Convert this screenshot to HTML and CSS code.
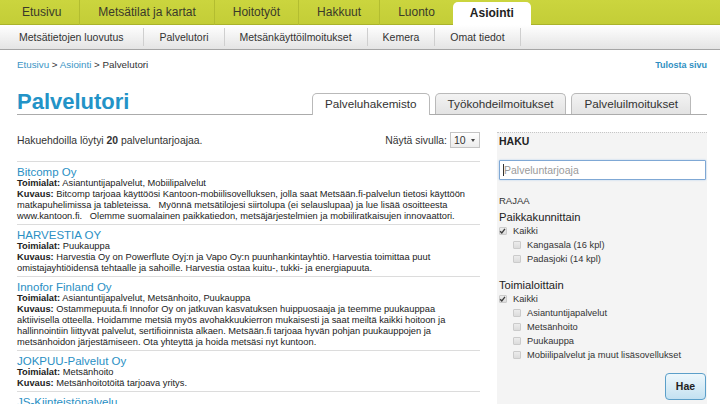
FILE: index.html
```html
<!DOCTYPE html>
<html lang="fi">
<head>
<meta charset="utf-8">
<title>Palvelutori</title>
<link rel="stylesheet" href="styles.css">
</head>
<body>
<header>
  <nav class="mainnav">
    <a href="#">Etusivu</a>
    <a href="#">Metsätilat ja kartat</a>
    <a href="#">Hoitotyöt</a>
    <a href="#">Hakkuut</a>
    <a href="#" class="nosep">Luonto</a>
    <a href="#" class="active">Asiointi</a>
  </nav>
  <nav class="subnav">
    <a href="#">Metsätietojen luovutus</a>
    <a href="#">Palvelutori</a>
    <a href="#">Metsänkäyttöilmoitukset</a>
    <a href="#">Kemera</a>
    <a href="#">Omat tiedot</a>
  </nav>
</header>

<div class="page">
  <div class="crumbs-row">
    <div class="crumbs"><a href="#">Etusivu</a> &gt; <a href="#">Asiointi</a> &gt; Palvelutori</div>
    <a href="#" class="print">Tulosta sivu</a>
  </div>

  <div class="title-row">
    <h1>Palvelutori</h1>
    <div class="tabs">
      <a href="#" class="tab active">Palveluhakemisto</a>
      <a href="#" class="tab">Työkohdeilmoitukset</a>
      <a href="#" class="tab">Palveluilmoitukset</a>
    </div>
  </div>

  <div class="main">
    <section class="results">
      <div class="results-head">
        <span>Hakuehdoilla löytyi <b>20</b> palveluntarjoajaa.</span>
        <span class="perpage">Näytä sivulla: <span class="select">10</span></span>
      </div>
      <ul class="list">
        <li>
          <a href="#" class="name">Bitcomp Oy</a>
          <p><b>Toimialat:</b> Asiantuntijapalvelut, Mobiilipalvelut</p>
          <p><b>Kuvaus:</b> Bitcomp tarjoaa käyttöösi Kantoon-mobiilisovelluksen, jolla saat Metsään.fi-palvelun tietosi käyttöön matkapuhelimissa ja tableteissa. &nbsp;&nbsp;Myönnä metsätilojesi siirtolupa (ei selauslupaa) ja lue lisää osoitteesta www.kantoon.fi. &nbsp;&nbsp;Olemme suomalainen paikkatiedon, metsäjärjestelmien ja mobiiliratkaisujen innovaattori.</p>
        </li>
        <li>
          <a href="#" class="name">HARVESTIA OY</a>
          <p><b>Toimialat:</b> Puukauppa</p>
          <p><b>Kuvaus:</b> Harvestia Oy on Powerflute Oyj:n ja Vapo Oy:n puunhankintayhtiö. Harvestia toimittaa puut omistajayhtiöidensä tehtaalle ja sahoille. Harvestia ostaa kuitu-, tukki- ja energiapuuta.</p>
        </li>
        <li>
          <a href="#" class="name">Innofor Finland Oy</a>
          <p><b>Toimialat:</b> Asiantuntijapalvelut, Metsänhoito, Puukauppa</p>
          <p><b>Kuvaus:</b> Ostammepuuta.fi Innofor Oy on jatkuvan kasvatuksen huippuosaaja ja teemme puukauppaa aktiivisella otteella. Hoidamme metsiä myös avohakkuukierron mukaisesti ja saat meiltä kaikki hoitoon ja hallinnointiin liittyvät palvelut, sertifioinnista alkaen. Metsään.fi tarjoaa hyvän pohjan puukauppojen ja metsänhoidon järjestämiseen. Ota yhteyttä ja hoida metsäsi nyt kuntoon.</p>
        </li>
        <li>
          <a href="#" class="name">JOKPUU-Palvelut Oy</a>
          <p><b>Toimialat:</b> Metsänhoito</p>
          <p><b>Kuvaus:</b> Metsänhoitotöitä tarjoava yritys.</p>
        </li>
        <li>
          <a href="#" class="name">JS-Kiinteistöpalvelu</a>
          <p><b>Toimialat:</b> Metsänhoito</p>
        </li>
      </ul>
    </section>

    <aside class="sidebar">
      <h2 class="haku">HAKU</h2>
      <div class="searchbox">
        <input type="text" placeholder="Palveluntarjoaja">
        <span class="caret"></span>
      </div>
      <div class="rajaa">RAJAA</div>
      <h3 class="group">Paikkakunnittain</h3>
      <ul class="checks">
        <li><span class="cb checked"><svg viewBox="0 0 8 8" width="8" height="8"><path d="M1.3 4.2 L3.2 6.2 L6.8 1.6" fill="none" stroke="#3a3a3a" stroke-width="1.5"/></svg></span>Kaikki</li>
        <li class="sub"><span class="cb"></span>Kangasala (16 kpl)</li>
        <li class="sub"><span class="cb"></span>Padasjoki (14 kpl)</li>
      </ul>
      <h3 class="group group2">Toimialoittain</h3>
      <ul class="checks">
        <li><span class="cb checked"><svg viewBox="0 0 8 8" width="8" height="8"><path d="M1.3 4.2 L3.2 6.2 L6.8 1.6" fill="none" stroke="#3a3a3a" stroke-width="1.5"/></svg></span>Kaikki</li>
        <li class="sub"><span class="cb"></span>Asiantuntijapalvelut</li>
        <li class="sub"><span class="cb"></span>Metsänhoito</li>
        <li class="sub"><span class="cb"></span>Puukauppa</li>
        <li class="sub"><span class="cb"></span>Mobiilipalvelut ja muut lisäsovellukset</li>
      </ul>
      <button type="button" class="hae">Hae</button>
    </aside>
  </div>
</div>
</body>
</html>
```

FILE: styles.css
```css
* { box-sizing: border-box; }
html, body { margin: 0; padding: 0; }
body {
  font-family: "Liberation Sans", Arial, sans-serif;
  color: #333;
  background: #fff;
  width: 720px;
  height: 404px;
  overflow: hidden;
}
a { color: #2b8ec3; text-decoration: none; }

/* main navigation */
.mainnav {
  display: flex;
  height: 25px;
  padding-left: 4px;
  background: linear-gradient(#cbd53e, #c3cd37);
  box-shadow: inset 0 -1px 0 #aab32c;
}
.mainnav a {
  padding: 0 18px;
  line-height: 25px;
  font-size: 12px;
  color: #3a3a2a;
  border-right: 1px solid #b3bd30;
}
.mainnav a.nosep { border-right: 0; }
.mainnav a.active {
  margin-top: 2px;
  line-height: 23px;
  background: #fff;
  color: #222;
  font-weight: bold;
  border-right: 0;
  border-radius: 5px 5px 0 0;
  padding: 0 17px;
}

/* sub navigation */
.subnav {
  display: flex;
  align-items: center;
  height: 25px;
  padding-left: 4px;
  background: linear-gradient(#ffffff, #e4e4e4);
  border-bottom: 1px solid #a5a5a5;
}
.subnav a {
  padding: 0 15px;
  line-height: 18px;
  font-size: 10.5px;
  color: #333;
  border-right: 1px solid #cfcfcf;
}
.subnav a:first-child { padding-right: 20px; }

/* page */
.page { padding: 0 13px 0 17px; }

.crumbs-row {
  display: flex;
  justify-content: space-between;
  align-items: baseline;
  padding-top: 9px;
  line-height: 12px;
}
.crumbs { font-size: 9.8px; color: #333; }
.crumbs a { color: #3c95c5; }
.print { font-size: 9px; font-weight: bold; color: #2f8fc2; }

.title-row {
  display: flex;
  align-items: flex-end;
  margin-top: 20px;
  border-bottom: 1px solid #ababab;
}
.title-row h1 {
  flex: 1;
  margin: 0;
  padding-bottom: 1px;
  font-size: 22px;
  line-height: 22px;
  font-weight: bold;
  color: #2393c7;
}
.tabs { display: flex; gap: 5px; margin-right: 16px; }
.tab {
  display: block;
  padding: 0 12px;
  height: 21px;
  line-height: 20px;
  font-size: 11.7px;
  color: #333;
  border: 1px solid #b9b9b9;
  border-bottom: 0;
  border-radius: 5px 5px 0 0;
  background: linear-gradient(#f3f3f3, #e3e3e3);
}
.tab.active {
  height: 22px;
  margin-bottom: -1px;
  background: #fff;
}

/* main area */
.main {
  display: grid;
  grid-template-columns: 463px 1fr;
  column-gap: 17px;
  margin-top: 17px;
}

.results-head {
  display: flex;
  justify-content: space-between;
  align-items: center;
  height: 16px;
  margin-bottom: 13px;
  font-size: 10.4px;
  color: #333;
}
.perpage { display: flex; align-items: center; }
.select {
  display: inline-flex;
  align-items: center;
  width: 30px;
  height: 16px;
  margin-left: 3px;
  padding-left: 3px;
  font-size: 10.5px;
  color: #333;
  border: 1px solid #c4c4c4;
  background: linear-gradient(#ffffff, #ececec);
}
.select::after {
  content: "";
  margin-left: 5px;
  border-top: 3px solid #444;
  border-left: 2px solid transparent;
  border-right: 2px solid transparent;
}

.list { list-style: none; margin: 0; padding: 0; }
.list li {
  border-top: 1px solid #dcdcdc;
  padding: 4px 6px 2px 0;
}
.list .name {
  display: block;
  font-size: 11.5px;
  line-height: 12px;
  color: #2a8fc4;
}
.list p {
  margin: 0;
  font-size: 9.3px;
  line-height: 11px;
  color: #222;
}

/* sidebar */
.sidebar {
  background: #f4f4f4;
  border-top: 1px dotted #c6c6c6;
  padding: 1.5px 1px 8px 2px;
}
.haku {
  margin: 0;
  font-size: 10.5px;
  line-height: 13px;
  font-weight: bold;
  color: #222;
}
.searchbox { position: relative; margin-top: 12.5px; }
.searchbox input {
  display: block;
  width: 100%;
  height: 20px;
  margin: 0;
  padding: 0 4px;
  font-family: inherit;
  font-size: 10.5px;
  color: #333;
  background: #fff;
  border: 1px solid #7fa8d5;
  border-radius: 1px;
  box-shadow: 0 0 2px #a9c9ec;
  outline: none;
}
.searchbox input::placeholder { color: #9a9a9a; }
.caret {
  position: absolute;
  left: 4px;
  top: 4px;
  width: 1px;
  height: 12px;
  background: #333;
}
.rajaa {
  margin-top: 14.7px;
  font-size: 9.5px;
  line-height: 12px;
  color: #333;
}
.group {
  margin: 3.3px 0 0;
  font-size: 11.2px;
  line-height: 14px;
  font-weight: normal;
  color: #222;
}
.group2 { margin-top: 12px; }
.checks { list-style: none; margin: 0; padding: 0; }
.checks li {
  display: flex;
  align-items: center;
  height: 14px;
  font-size: 9.3px;
  color: #333;
}
.checks li.sub { padding-left: 14px; }
.cb {
  display: inline-flex;
  width: 8px;
  height: 8px;
  margin: 0 6px 0 0;
  border: 1px solid #cbcbcb;
  border-radius: 1px;
  background: linear-gradient(#ececec, #dcdcdc);
}
.cb svg { display: block; margin: -1px 0 0 -1px; }
.hae {
  display: block;
  margin: 11px 0 0 auto;
  width: 41px;
  height: 27px;
  padding: 0;
  font-family: inherit;
  font-size: 10.5px;
  font-weight: bold;
  color: #222;
  border: 1px solid #5b9fc9;
  border-radius: 4px;
  background: linear-gradient(#edf7fc, #c3e1f1);
}
```
